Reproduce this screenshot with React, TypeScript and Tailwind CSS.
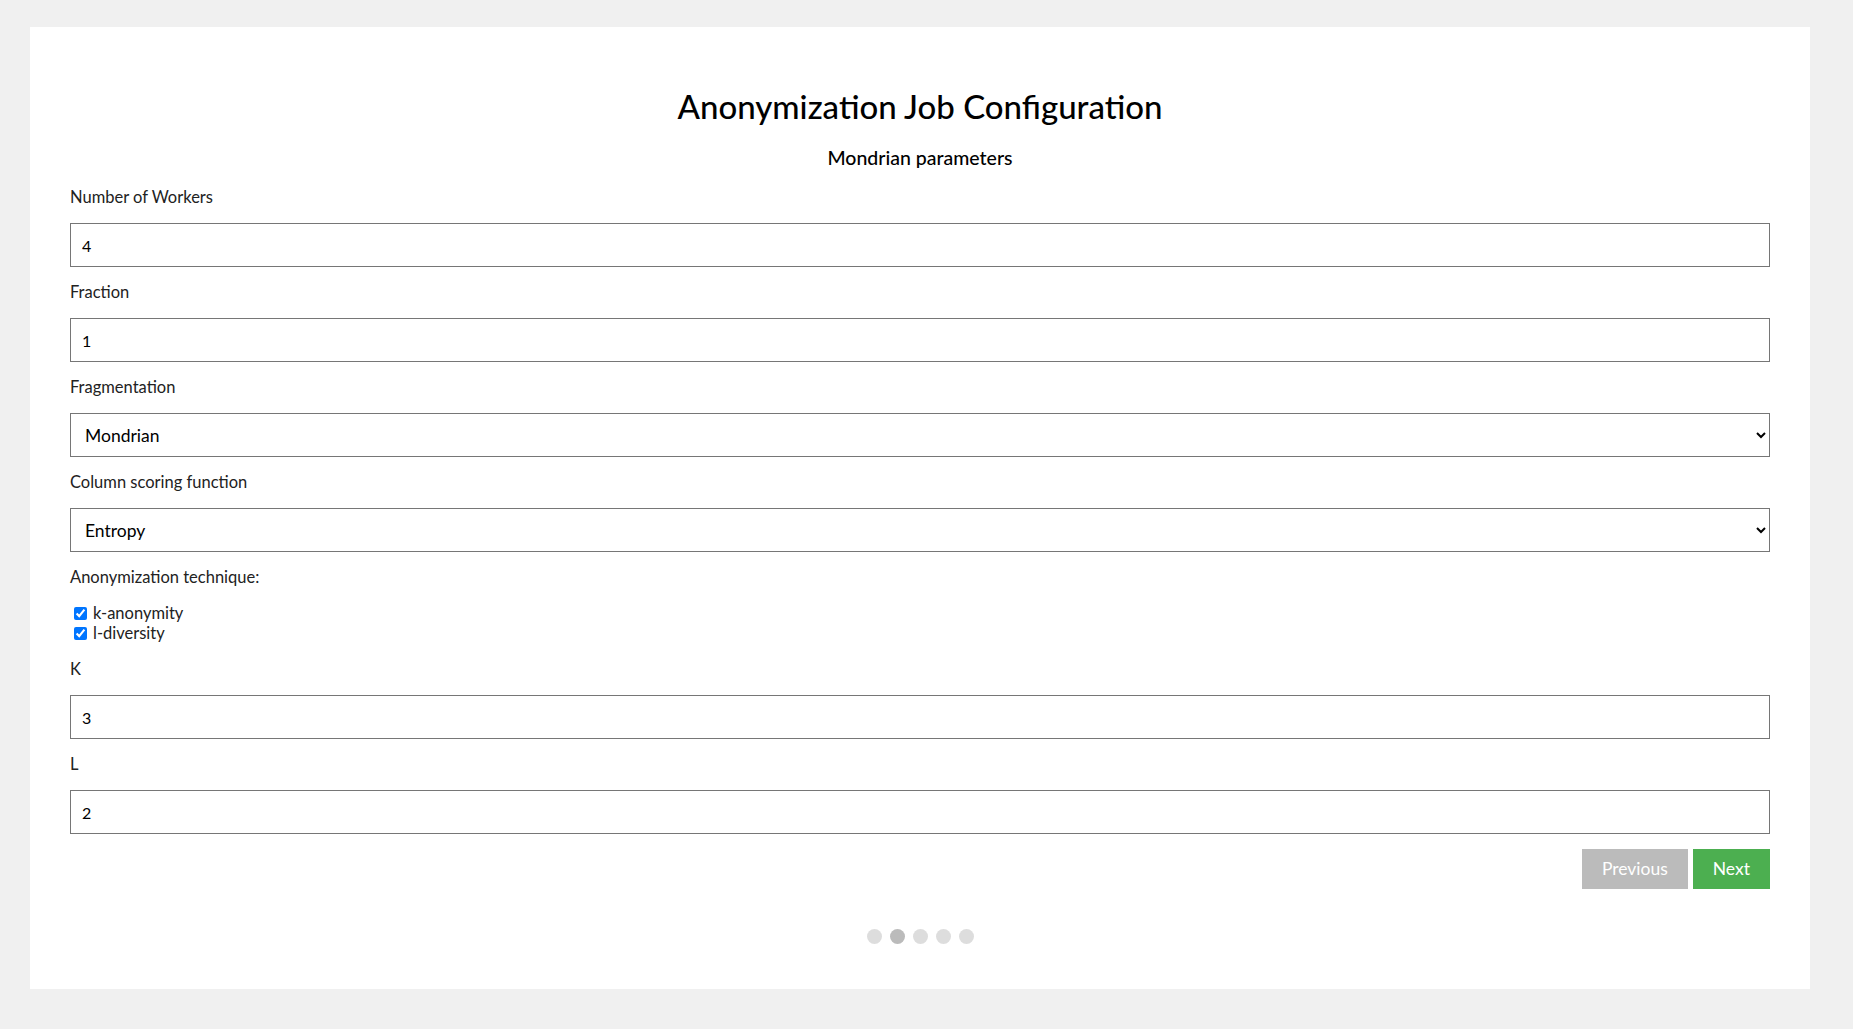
import { useState } from 'react';

const font = "font-['Lato','Noto_Sans',sans-serif]";

function Field({ label, children }: { label: string; children: React.ReactNode }) {
  return (
    <div className="mt-[15px] first:mt-0">
      <label className="block h-5 text-[16.5px] leading-5 text-[#222]">{label}</label>
      <div className="mt-4">{children}</div>
    </div>
  );
}

function TextInput({ value }: { value: string }) {
  const [v, setV] = useState(value);
  return (
    <input
      value={v}
      onChange={(e) => setV(e.target.value)}
      className="block h-[44px] w-full border border-[#767676] bg-white px-[11px] text-[16px] text-black outline-none"
    />
  );
}

function Select({ value, options }: { value: string; options: string[] }) {
  return (
    <select
      defaultValue={value}
      className="block h-[44px] w-full border border-[#767676] bg-white px-[10px] text-[17.5px] text-black outline-none"
    >
      {options.map((o) => (
        <option key={o}>{o}</option>
      ))}
    </select>
  );
}

export default function App() {
  const [k, setK] = useState(true);
  const [l, setL] = useState(true);
  const step = 1;

  return (
    <div className={`min-h-[1029px] bg-[#f0f0f0] pt-[27px] pb-[41px] ${font}`}>
      <div className="ml-[30px] w-[1780px] bg-white px-10 pt-10 pb-[45px]">
        <h1 className="mt-5 text-center text-[33px] leading-[38px] font-medium text-black">
          Anonymization Job Configuration
        </h1>
        <h3 className="mt-[22px] text-center text-[19.5px] leading-[22px] font-medium text-black">
          Mondrian parameters
        </h3>

        <div className="mt-[18px] flex flex-col">
          <Field label="Number of Workers">
            <TextInput value="4" />
          </Field>
          <Field label="Fraction">
            <TextInput value="1" />
          </Field>
          <Field label="Fragmentation">
            <Select value="Mondrian" options={['Mondrian', 'Quantile', 'Round robin']} />
          </Field>
          <Field label="Column scoring function">
            <Select value="Entropy" options={['Entropy', 'Span', 'Neg. entropy']} />
          </Field>

          <div className="mt-[15px]">
            <p className="h-5 text-[16.5px] leading-5 text-[#222]">Anonymization technique:</p>
            <div className="mt-4 flex flex-col">
              <label className="flex h-5 items-center gap-[6px] pl-1 text-[16.5px] text-[#222]">
                <input type="checkbox" checked={k} onChange={() => setK(!k)} className="h-[13px] w-[13px]" />
                k-anonymity
              </label>
              <label className="flex h-5 items-center gap-[6px] pl-1 text-[16.5px] text-[#222]">
                <input type="checkbox" checked={l} onChange={() => setL(!l)} className="h-[13px] w-[13px]" />
                l-diversity
              </label>
            </div>
          </div>

          <div className="mt-4">
            <Field label="K">
              <TextInput value="3" />
            </Field>
          </div>
          <Field label="L">
            <TextInput value="2" />
          </Field>
        </div>

        <div className="mt-[15px] flex justify-end gap-[5px]">
          <button className="h-10 bg-[#bbbbbb] px-5 text-[17.5px] text-white">Previous</button>
          <button className="h-10 bg-[#4caf50] px-5 text-[17.5px] text-white">Next</button>
        </div>

        <div className="mt-10 flex justify-center gap-2">
          {[0, 1, 2, 3, 4].map((i) => (
            <span
              key={i}
              className={
                i === step
                  ? 'h-[15px] w-[15px] rounded-full bg-[#bbbbbb]'
                  : 'h-[15px] w-[15px] rounded-full bg-[#bbbbbb] opacity-50'
              }
            />
          ))}
        </div>
      </div>
    </div>
  );
}
